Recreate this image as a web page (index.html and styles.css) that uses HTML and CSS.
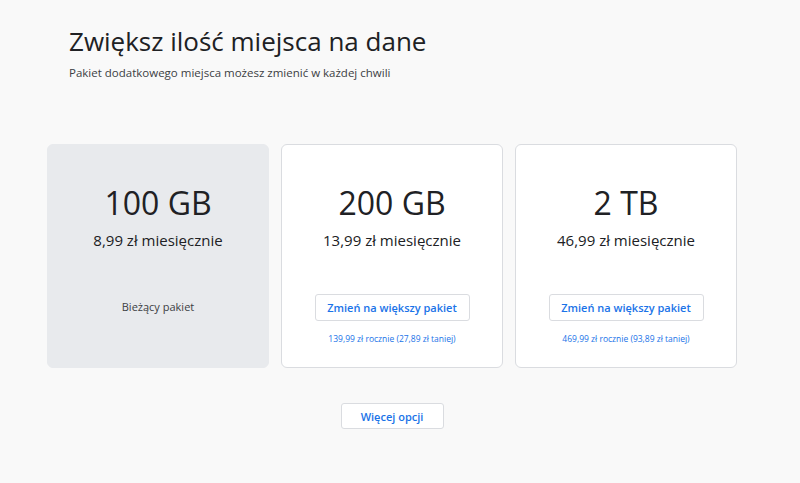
FILE: index.html
```html
<!DOCTYPE html>
<html lang="pl">
<head>
<meta charset="utf-8">
<link rel="stylesheet" href="styles.css">
</head>
<body>
<div class="page">
  <header class="head">
    <h1 class="title">Zwiększ ilość miejsca na dane</h1>
    <p class="subtitle">Pakiet dodatkowego miejsca możesz zmienić w każdej chwili</p>
  </header>
  <div class="plans">
    <div class="card current">
      <div class="size">100 GB</div>
      <div class="price">8,99 zł miesięcznie</div>
      <div class="foot"><span class="cur-label">Bieżący pakiet</span></div>
    </div>
    <div class="card">
      <div class="size">200 GB</div>
      <div class="price">13,99 zł miesięcznie</div>
      <div class="foot">
        <button class="btn">Zmień na większy pakiet</button>
        <a class="yearly">139,99 zł rocznie (27,89 zł taniej)</a>
      </div>
    </div>
    <div class="card">
      <div class="size">2 TB</div>
      <div class="price">46,99 zł miesięcznie</div>
      <div class="foot">
        <button class="btn">Zmień na większy pakiet</button>
        <a class="yearly">469,99 zł rocznie (93,89 zł taniej)</a>
      </div>
    </div>
  </div>
  <div class="more-row"><button class="btn more">Więcej opcji</button></div>
</div>
</body>
</html>
```
FILE: styles.css
```css
* { box-sizing: border-box; }
html, body { margin: 0; padding: 0; }
body {
  background: #f9f9f9;
  font-family: "Open Sans", "Noto Sans", sans-serif;
  color: #202124;
  width: 800px;
  height: 483px;
  overflow: hidden;
}
.page { padding: 23px 0 0 47px; }
.head { padding-left: 22px; }
.title {
  margin: 0;
  font-weight: 400;
  font-size: 26px;
  line-height: 36px;
  color: #202124;
}
.subtitle {
  margin: 6px 0 0;
  font-size: 11.5px;
  line-height: 16px;
  color: #3c4043;
}
.plans {
  display: flex;
  gap: 12px;
  margin-top: 63px;
}
.card {
  width: 222px;
  height: 224px;
  background: #fff;
  border: 1px solid #dadce0;
  border-radius: 6px;
  display: flex;
  flex-direction: column;
  align-items: center;
  padding-top: 38px;
}
.card.current { background: #e8eaed; border-color: #e8eaed; }
.size {
  font-size: 32px;
  line-height: 40px;
  color: #202124;
}
.price {
  margin-top: 7px;
  font-size: 15px;
  line-height: 20px;
  color: #202124;
}
.foot {
  margin-top: 44px;
  display: flex;
  flex-direction: column;
  align-items: center;
}
.cur-label {
  margin-top: 5px;
  font-size: 11px;
  color: #3c4043;
}
.btn {
  font-family: inherit;
  width: 155px;
  height: 27px;
  background: #fff;
  border: 1px solid #dadce0;
  border-radius: 3px;
  color: #1a73e8;
  font-weight: 600;
  font-size: 11px;
  padding: 0;
}
.yearly {
  margin-top: 12px;
  font-size: 8.5px;
  color: #1a73e8;
}
.more-row {
  width: 690px;
  display: flex;
  justify-content: center;
  margin-top: 35px;
}
.btn.more { width: 103px; height: 26px; }
```
